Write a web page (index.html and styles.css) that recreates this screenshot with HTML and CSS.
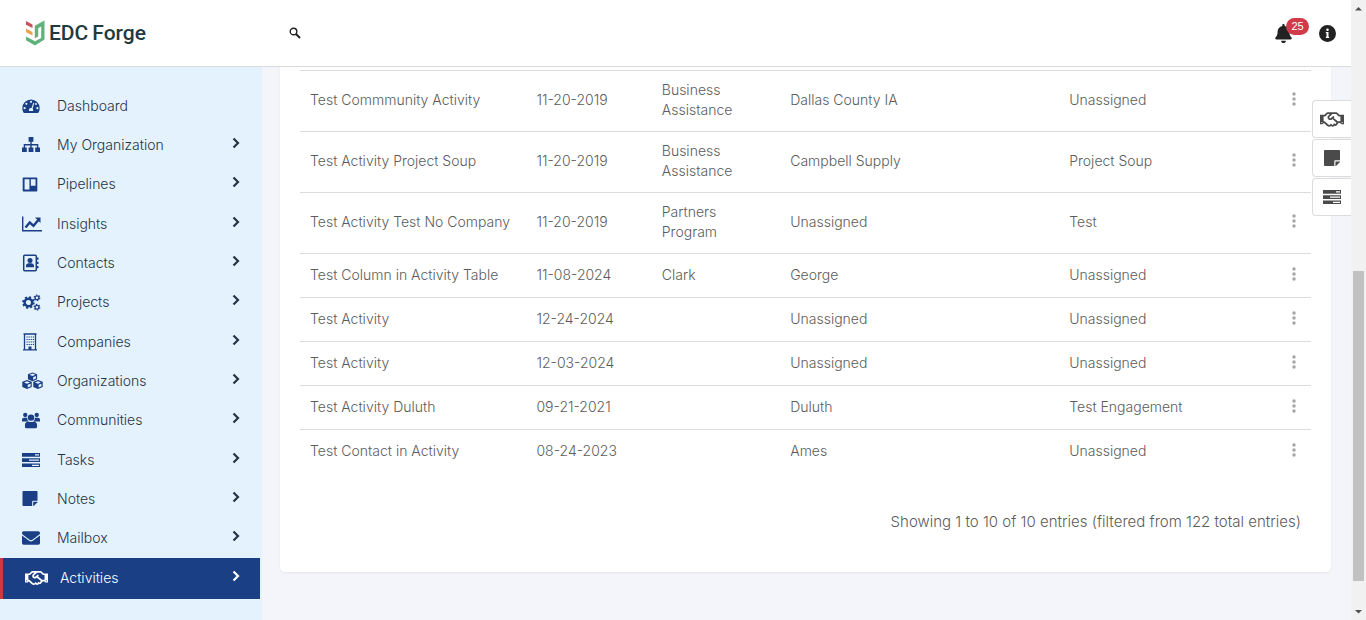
FILE: index.html
```html
<!DOCTYPE html>
<html lang="en">
  <head>
    <meta charset="utf-8">
    <title>EDC Forge - Activities</title>
    <link rel="stylesheet" href="styles.css">
  </head>
  <body>

    <svg class="sprite" aria-hidden="true">
      <symbol id="chevron" viewBox="0 0 8 12"><path d="M1.500 1.500 6 6l-4.500 4.500" fill="none" stroke="currentColor" stroke-width="2.200"/></symbol>
      <symbol id="dots" viewBox="0 0 4 14"><circle cx="2" cy="2" r="1.700"/><circle cx="2" cy="7" r="1.700"/><circle cx="2" cy="12" r="1.700"/></symbol>
      <symbol id="dashboard" viewBox="0 0 18 16">
        <path fill-rule="evenodd" d="M9 1.500a8.700 8.700 0 0 0-8.700 8.700c0 1.600.4 3 1.100 4.200.2.300.5.500.9.500h13.400c.4 0 .7-.2.900-.5.700-1.200 1.100-2.600 1.100-4.200A8.700 8.700 0 0 0 9 1.500zM9 2.700a1.100 1.100 0 1 1 0 2.200 1.100 1.100 0 0 1 0-2.200zM4.400 4.700a1.100 1.100 0 1 1 0 2.200 1.100 1.100 0 0 1 0-2.200zM2.600 9.100a1.100 1.100 0 1 1 0 2.200 1.100 1.100 0 0 1 0-2.200zM15.400 9.100a1.100 1.100 0 1 1 0 2.200 1.100 1.100 0 0 1 0-2.200zM14 5.100a1 1 0 1 1 0 2 1 1 0 0 1 0-2zM11.300 4.800l1 .3-1.700 5.400a2 2 0 0 1 .3 2.400H7.100a2 2 0 0 1 2.400-2.800z"/>
      </symbol>
      <symbol id="sitemap" viewBox="0 0 18 16">
        <path d="M6.600 0h4.800v4.800H6.600zM0 10.500h4.800V15H0zM6.600 10.500h4.800V15H6.600zM13.200 10.500H18V15h-4.800z"/>
        <path d="M9 4v7M2.400 11V7.700h13.200V11" fill="none" stroke="currentColor" stroke-width="1.400"/>
      </symbol>
      <symbol id="board" viewBox="0 0 16 16"><path fill-rule="evenodd" d="M1 .5h14a.8.8 0 0 1 .8.800v13.400a.8.800 0 0 1-.8.800H1a.8.800 0 0 1-.8-.8V1.300A.8.800 0 0 1 1 .5zM2.200 2.300v10.900h5.200V2.300zm6.700 0v7h5v-7z"/></symbol>
      <symbol id="chart" viewBox="0 0 20 16"><path d="M.7.500v14.300H20" fill="none" stroke="currentColor" stroke-width="1.400"/><path d="M3.500 11.500l4.300-5 3.700 3.300 5-6" fill="none" stroke="currentColor" stroke-width="2.400"/><path d="M13 1.500h5.500V7z"/></symbol>
      <symbol id="contacts" viewBox="0 0 17 18">
        <rect x="1.700" y="1.200" width="12.600" height="15.600" rx="1" fill="none" stroke="currentColor" stroke-width="1.500"/>
        <path d="M15 3.500h1.500v2.300H15zM15 7.700h1.500V10H15zM15 12h1.500v2.300H15zM4 13.300v-1.500c0-1.800 1.300-2.600 2.700-2.600h2.600c1.400 0 2.700.8 2.700 2.600v1.500z"/><circle cx="8" cy="6.500" r="2.500"/>
      </symbol>
      <symbol id="cogs" viewBox="0 0 20 18" fill="none">
        <g stroke="currentColor">
          <circle cx="6.700" cy="9" r="4" stroke-width="2.600"/><circle cx="6.700" cy="9" r="5.700" stroke-width="1.900" stroke-dasharray="2.240 2.240"/>
          <circle cx="15.800" cy="4" r="2" stroke-width="1.300"/><circle cx="15.800" cy="4" r="3" stroke-width="1.200" stroke-dasharray="1.570 1.570"/>
          <circle cx="15.800" cy="14" r="2" stroke-width="1.300"/><circle cx="15.800" cy="14" r="3" stroke-width="1.200" stroke-dasharray="1.570 1.570"/>
        </g>
      </symbol>
      <symbol id="building" viewBox="0 0 14 18">
        <path d="M1.500 16.500V1h11v15.500M0 16.800h14M.5 1h13" fill="none" stroke="currentColor" stroke-width="1.300"/>
        <path d="M3.500 4h7.500M3.500 6.500h7.500M3.500 9h7.500M3.500 11.500h7.500" fill="none" stroke="currentColor" stroke-width="1.200" stroke-dasharray="1.200 .9"/><path d="M5.500 13.500h3V17h-3z"/>
      </symbol>
      <symbol id="cubes" viewBox="0 0 22 18">
        <path fill-rule="evenodd" d="M11 0l4.800 1.900v5.300L11 9.300 6.200 7.200V1.900zM11 1.200L7.900 2.500 11 3.700l3.100-1.200zM11.700 5v2.800l2.900-1.300V3.800zM5.300 8l4.900 1.900v5.400l-4.900 2.200-5-2.200V9.900zM5.300 9.200l-3.200 1.300 3.200 1.300 3.100-1.300zM6 13v2.900l3-1.300v-2.800zM16.700 8l5 1.900v5.400l-5 2.200-4.900-2.200V9.900zM16.700 9.200l-3.100 1.300 3.100 1.300 3.200-1.300zM17.400 13v2.900l3-1.300v-2.800z"/>
      </symbol>
      <symbol id="users" viewBox="0 0 20 18">
        <circle cx="3.600" cy="2.900" r="2.400"/><circle cx="16.400" cy="2.900" r="2.400"/><circle cx="10" cy="5.800" r="3.600"/>
        <path d="M0 10V8.300C0 6.900 1 6 2.300 6h2.400c.3 0 .7.100 1 .2C5.700 7.700 6.300 9 7 9.700L4.800 10zM20 10V8.300C20 6.900 19 6 17.700 6h-2.400c-.3 0-.7.100-1 .2 0 1.500-.6 2.800-1.300 3.500l2.200.3zM3.300 16.300v-2.500c0-2.300 1.700-3.800 3.700-3.800 1 .6 2 .8 3 .8s2-.2 3-.8c2 0 3.700 1.500 3.700 3.800v2.500c0 .7-.6 1.200-1.200 1.200h-11c-.7 0-1.200-.5-1.200-1.200z"/>
      </symbol>
      <symbol id="tasks" viewBox="0 0 18 16"><path fill-rule="evenodd" d="M0 1h18v3.700H0zM13 2.300v1.200h4V2.300zM0 6.200h18v3.700H0zM7 7.500v1.200h10V7.500zM0 11.400h18v3.700H0zM10 12.700v1.200h7v-1.200z"/></symbol>
      <symbol id="note" viewBox="0 32 448 448"><path d="M312 320h136V56c0-13.300-10.700-24-24-24H24C10.700 32 0 42.700 0 56v400c0 13.300 10.700 24 24 24h264V344c0-13.200 10.800-24 24-24zm129 55l-98 98c-4.500 4.500-10.600 7-17 7h-6V352h128v6.100c0 6.300-2.500 12.400-7 16.900z"/></symbol>
      <symbol id="mail" viewBox="0 64 512 384"><path d="M502.300 190.800c3.900-3.100 9.700-.2 9.700 4.700V400c0 26.500-21.500 48-48 48H48c-26.500 0-48-21.500-48-48V195.600c0-5 5.700-7.800 9.700-4.700 22.400 17.400 52.100 39.500 154.100 113.600 21.100 15.400 56.700 47.800 92.200 47.600 35.700.3 72-32.800 92.300-47.600 102-74.100 131.600-96.300 154-113.700zM256 320c23.200.4 56.600-29.200 73.400-41.400 132.700-96.300 142.800-104.700 173.400-128.700 5.800-4.500 9.200-11.500 9.200-18.900v-19c0-26.500-21.500-48-48-48H48c-26.500 0-48 21.500-48 48v19c0 7.400 3.400 14.300 9.200 18.900 30.600 23.900 40.700 32.400 173.400 128.700 16.800 12.200 50.200 41.800 73.400 41.400z"/></symbol>
      <symbol id="handshake" viewBox="0 40 640 432"><path d="M519.2 127.9l-47.600-47.600A56.252 56.252 0 0 0 432 64H205.200c-14.800 0-29.100 5.900-39.600 16.300L118 127.900H0v255.700h64c17.600 0 31.800-14.200 31.900-31.700h9.100l84.600 76.400c30.900 25.100 73.800 25.700 105.600 3.800 12.500 10.800 26 15.900 41.100 15.900 18.200 0 35.300-7.400 48.800-24 22.100 8.700 48.200 2.600 64-16.800l26.200-32.300c5.600-6.900 9.100-14.800 10.900-23h57.900c.1 17.500 14.400 31.700 31.900 31.700h64V127.900H519.200zM48 351.600c-8.800 0-16-7.200-16-16s7.200-16 16-16 16 7.200 16 16c0 8.900-7.200 16-16 16zm390-6.900l-26.100 32.200c-2.800 3.400-7.800 4-11.300 1.200l-23.900-19.400-30 36.500c-6 7.300-15 4.800-18 2.400l-36.800-31.500-15.600 19.200c-13.900 17.100-39.200 19.700-55.300 6.600l-97.300-88H96V175.800h41.900l61.700-61.600c2-.8 3.700-1.500 5.700-2.300H262l-38.700 35.500c-29.400 26.900-31.100 72.300-4.400 101.300 14.800 16.200 61.200 41.200 101.500 4.400l8.200-7.500 108.200 87.800c3.400 2.800 3.900 7.900 1.200 11.300zm106-40.800h-69.200c-2.300-2.800-4.900-5.400-7.700-7.700l-102.700-83.400 12.500-11.400c6.500-6 7-16.100 1-22.600L367 167.100c-6-6.500-16.100-6.900-22.600-1l-55.200 50.600c-9.500 8.700-25.700 9.400-34.600 0-9.300-9.900-8.500-25.100 1.200-33.900l65.600-60.100c7.400-6.800 17-10.500 27-10.500l83.700-.2c2.100 0 4.100.8 5.500 2.300l61.700 61.600H544v128zm48 47.700c-8.800 0-16-7.200-16-16s7.200-16 16-16 16 7.200 16 16c0 8.900-7.200 16-16 16z"/></symbol>
    </svg>

    <header class="topbar">
      <a class="logo" href="#">
        <svg class="logoMark" viewBox="0 0 20 26">
          <path d="M1 1l6.500 3.500v3.500L1 4.800z" fill="#c9515a"/>
          <path d="M1 8.500l6.500 3.500v3.500L1 12.300z" fill="#e8a34c"/>
          <path fill-rule="evenodd" d="M1 16.500l9 4.800 6.200-3.400V6.500l-3 1.700v8.300l-3.400 1.800V5.700L19.500.5v19L10 25.500 1 20.300z" fill="#5fb27a"/>
        </svg>
        <span>EDC</span><span>Forge</span>
      </a>
      <button class="iconButton searchButton" type="button" aria-label="Search">
        <svg width="12" height="12" viewBox="0 0 12 12" fill="none" stroke="currentColor"><circle cx="4.500" cy="4.500" r="3.300" stroke-width="1.400"/><path d="M7 7l4 4" stroke-width="1.900"/></svg>
      </button>
      <div class="topActions">
        <button class="iconButton bellButton" type="button" aria-label="Notifications">
          <svg width="17" height="19" viewBox="0 0 448 512"><path d="M224 512c35.320 0 63.970-28.650 63.970-64H160.030c0 35.350 28.650 64 63.970 64zm215.390-149.710c-19.320-20.760-55.470-51.990-55.470-154.290 0-77.700-54.480-139.900-127.940-155.160V32c0-17.670-14.320-32-31.980-32s-31.980 14.330-31.980 32v20.840C118.560 68.100 64.080 130.300 64.080 208c0 102.300-36.150 133.530-55.470 154.290-6 6.450-8.660 14.160-8.610 21.710.11 16.400 12.980 32 32.100 32h383.800c19.120 0 32-15.600 32.100-32 .05-7.550-2.610-15.270-8.610-21.710z"/></svg>
          <span class="badge">25</span>
        </button>
        <button class="iconButton" type="button" aria-label="Information">
          <svg width="17" height="17" viewBox="0 0 17 17"><path fill-rule="evenodd" d="M8.500 0a8.500 8.500 0 1 1 0 17 8.500 8.500 0 0 1 0-17zM8.500 3.500a1.300 1.300 0 1 0 0 2.600 1.300 1.300 0 0 0 0-2.600zM6.800 7v1.200h.7v3.600h-.7V13h3.400v-1.200h-.7V7z"/></svg>
        </button>
      </div>
    </header>

    <nav class="sidebar">
      <ul class="menu">
        <li><a href="#"><svg class="menuIcon" width="18" height="16"><use href="#dashboard"/></svg><span>Dashboard</span></a></li>
        <li><a href="#"><svg class="menuIcon" width="18" height="16"><use href="#sitemap"/></svg><span>My Organization</span><svg class="chevron"><use href="#chevron"/></svg></a></li>
        <li><a href="#"><svg class="menuIcon" width="16" height="15"><use href="#board"/></svg><span>Pipelines</span><svg class="chevron"><use href="#chevron"/></svg></a></li>
        <li><a href="#"><svg class="menuIcon" width="20" height="16"><use href="#chart"/></svg><span>Insights</span><svg class="chevron"><use href="#chevron"/></svg></a></li>
        <li><a href="#"><svg class="menuIcon" width="17" height="18"><use href="#contacts"/></svg><span>Contacts</span><svg class="chevron"><use href="#chevron"/></svg></a></li>
        <li><a href="#"><svg class="menuIcon" width="19" height="17"><use href="#cogs"/></svg><span>Projects</span><svg class="chevron"><use href="#chevron"/></svg></a></li>
        <li><a href="#"><svg class="menuIcon" width="16" height="18"><use href="#building"/></svg><span>Companies</span><svg class="chevron"><use href="#chevron"/></svg></a></li>
        <li><a href="#"><svg class="menuIcon" width="21" height="18"><use href="#cubes"/></svg><span>Organizations</span><svg class="chevron"><use href="#chevron"/></svg></a></li>
        <li><a href="#"><svg class="menuIcon" width="18" height="17"><use href="#users"/></svg><span>Communities</span><svg class="chevron"><use href="#chevron"/></svg></a></li>
        <li><a href="#"><svg class="menuIcon" width="18" height="16"><use href="#tasks"/></svg><span>Tasks</span><svg class="chevron"><use href="#chevron"/></svg></a></li>
        <li><a href="#"><svg class="menuIcon" width="16" height="15"><use href="#note"/></svg><span>Notes</span><svg class="chevron"><use href="#chevron"/></svg></a></li>
        <li><a href="#"><svg class="menuIcon" width="18" height="14"><use href="#mail"/></svg><span>Mailbox</span><svg class="chevron"><use href="#chevron"/></svg></a></li>
        <li class="active"><a href="#"><svg class="menuIcon" width="23" height="16"><use href="#handshake"/></svg><span>Activities</span><svg class="chevron"><use href="#chevron"/></svg></a></li>
      </ul>
    </nav>

    <main class="content">
      <section class="card">
        <table class="activities">
          <colgroup>
            <col class="colName"><col class="colDate"><col class="colType"><col class="colCompany"><col class="colProject"><col>
          </colgroup>
          <tbody>
            <tr><td>Test Commmunity Activity</td><td>11-20-2019</td><td>Business Assistance</td><td>Dallas County IA</td><td>Unassigned</td><td><button class="iconButton rowMenu" type="button" aria-label="Row menu"><svg><use href="#dots"/></svg></button></td></tr>
            <tr><td>Test Activity Project Soup</td><td>11-20-2019</td><td>Business Assistance</td><td>Campbell Supply</td><td>Project Soup</td><td><button class="iconButton rowMenu" type="button" aria-label="Row menu"><svg><use href="#dots"/></svg></button></td></tr>
            <tr><td>Test Activity Test No Company</td><td>11-20-2019</td><td>Partners Program</td><td>Unassigned</td><td>Test</td><td><button class="iconButton rowMenu" type="button" aria-label="Row menu"><svg><use href="#dots"/></svg></button></td></tr>
            <tr><td>Test Column in Activity Table</td><td>11-08-2024</td><td>Clark</td><td>George</td><td>Unassigned</td><td><button class="iconButton rowMenu" type="button" aria-label="Row menu"><svg><use href="#dots"/></svg></button></td></tr>
            <tr><td>Test Activity</td><td>12-24-2024</td><td></td><td>Unassigned</td><td>Unassigned</td><td><button class="iconButton rowMenu" type="button" aria-label="Row menu"><svg><use href="#dots"/></svg></button></td></tr>
            <tr><td>Test Activity</td><td>12-03-2024</td><td></td><td>Unassigned</td><td>Unassigned</td><td><button class="iconButton rowMenu" type="button" aria-label="Row menu"><svg><use href="#dots"/></svg></button></td></tr>
            <tr><td>Test Activity Duluth</td><td>09-21-2021</td><td></td><td>Duluth</td><td>Test Engagement</td><td><button class="iconButton rowMenu" type="button" aria-label="Row menu"><svg><use href="#dots"/></svg></button></td></tr>
            <tr><td>Test Contact in Activity</td><td>08-24-2023</td><td></td><td>Ames</td><td>Unassigned</td><td><button class="iconButton rowMenu" type="button" aria-label="Row menu"><svg><use href="#dots"/></svg></button></td></tr>
          </tbody>
        </table>
        <p class="tableInfo">Showing 1 to 10 of 10 entries (filtered from 122 total entries)</p>
      </section>
    </main>

    <div class="quickActions">
      <button type="button" aria-label="Add activity"><svg width="24" height="17"><use href="#handshake"/></svg></button>
      <button type="button" aria-label="Add note"><svg width="16" height="16"><use href="#note"/></svg></button>
      <button type="button" aria-label="Add task"><svg width="18" height="16"><use href="#tasks"/></svg></button>
    </div>

    <div class="scrollbar" aria-hidden="true">
      <svg viewBox="0 0 15 17"><path d="M4 10.500h7L7.500 7z"/></svg>
      <div class="scrollTrack"><div class="scrollThumb"></div></div>
      <svg viewBox="0 0 15 17"><path d="M4 7h7l-3.500 3.500z"/></svg>
    </div>

  </body>
</html>
```
FILE: styles.css
```css
* {
  box-sizing: border-box;
}

body {
  margin: 0;
  min-height: 100vh;
  background-color: #f4f5fa;
  color: #5c5c5c;
  font-family: Inter, "Liberation Sans", sans-serif;
  font-size: 14px;
  font-weight: 300;
  line-height: 20px;
}

svg {
  display: block;
  fill: currentColor;
}

svg[fill="none"] {
  fill: none;
}

.sprite {
  display: none;
}

.iconButton {
  display: block;
  padding: 0;
  border: none;
  background: none;
  color: #222;
  cursor: pointer;
}

/* top bar */

.topbar {
  position: fixed;
  top: 0;
  left: 0;
  right: 15px;
  z-index: 3;
  height: 67px;
  padding: 0 15px 0 25px;
  display: flex;
  align-items: center;
  background-color: #fff;
  border-bottom: 1px solid #d8dbde;
}

.logo {
  width: 264px;
  display: flex;
  align-items: center;
  gap: 4px;
  color: #1f3a40;
  font-family: Roboto, "Liberation Sans", sans-serif;
  font-size: 21px;
  font-weight: 500;
  text-decoration: none;
}

.logoMark {
  width: 20px;
  height: 26px;
}

.topActions {
  margin-left: auto;
  display: flex;
  align-items: center;
  gap: 27px;
}

.bellButton {
  position: relative;
}

.badge {
  position: absolute;
  top: -6px;
  left: 11px;
  width: 23px;
  height: 17px;
  border-radius: 9px;
  background-color: #d03a49;
  color: #fff;
  font-size: 11px;
  line-height: 16px;
  text-align: center;
}

/* sidebar */

.sidebar {
  position: fixed;
  top: 67px;
  bottom: 0;
  left: 0;
  width: 262px;
  padding: 19px 2px 21px 0;
  display: flex;
  background-color: #e3f2fd;
}

.menu {
  flex: 1;
  margin: 0;
  padding: 0;
  display: flex;
  flex-direction: column;
  list-style: none;
}

.menu li {
  flex: 1;
  display: flex;
}

/* the icons differ in width, the labels line up */
.menu a {
  flex: 1;
  padding: 0 18px 0 22px;
  display: grid;
  grid-template-columns: 23px 1fr 10px;
  align-items: center;
  color: #263445;
  text-decoration: none;
}

.menu span {
  padding-left: 12px;
}

.menuIcon {
  color: #1a3f85;
}

.chevron {
  width: 8px;
  height: 16px;
  padding-bottom: 4px;
}

.menu .active {
  flex: 0 0 41px;
  border-left: 3px solid #cf3748;
  background-color: #1a3f85;
}

.active a,
.active .menuIcon {
  color: #fff;
}

/* activities table */

.content {
  margin: 67px 35px 47px 280px;
}

.card {
  padding: 3px 20px 40px;
  background-color: #fff;
  border-radius: 0 0 5px 5px;
  box-shadow: 0 1px 2px #e4e5ea;
}

.activities {
  width: 100%;
  table-layout: fixed;
  border-collapse: collapse;
}

.activities td {
  height: 44px;
  padding: 9px 10px 11px;
  border-top: 1px solid #dcdcdc;
  vertical-align: middle;
}

.colName {
  width: 22.4%;
}

.colDate {
  width: 12.4%;
}

.colType {
  width: 12.7%;
}

.colCompany {
  width: 27.6%;
}

.colProject {
  width: 20%;
}

.activities td:last-child {
  padding-right: 15px;
}

.rowMenu {
  margin-left: auto;
  color: #a5a5a5;
}

.rowMenu svg {
  width: 4px;
  height: 16px;
  padding-bottom: 2px;
}

.tableInfo {
  margin: 38px 10px 0;
  font-size: 15px;
  text-align: right;
}

/* buttons on the right edge */

.quickActions {
  position: fixed;
  top: 100px;
  right: 15px;
  display: flex;
  flex-direction: column;
  gap: 1px;
}

.quickActions button {
  width: 39px;
  height: 38px;
  padding: 0;
  display: flex;
  align-items: center;
  justify-content: center;
  border: 1px solid #dcdcdc;
  border-right: none;
  border-radius: 4px 0 0 4px;
  background-color: #fff;
  color: #4a4a4a;
}

/* scrollbar */

.scrollbar {
  position: fixed;
  top: 0;
  right: 0;
  bottom: 0;
  width: 15px;
  display: flex;
  flex-direction: column;
  background-color: #f1f1f1;
  color: #505050;
}

.scrollbar svg {
  width: 15px;
  height: 17px;
}

.scrollTrack {
  flex: 1;
  padding: 0 2px;
  display: grid;
  grid-template-rows: 254fr 310fr 22fr;
}

.scrollThumb {
  grid-row: 2;
  background-color: #c1c1c1;
}
```
